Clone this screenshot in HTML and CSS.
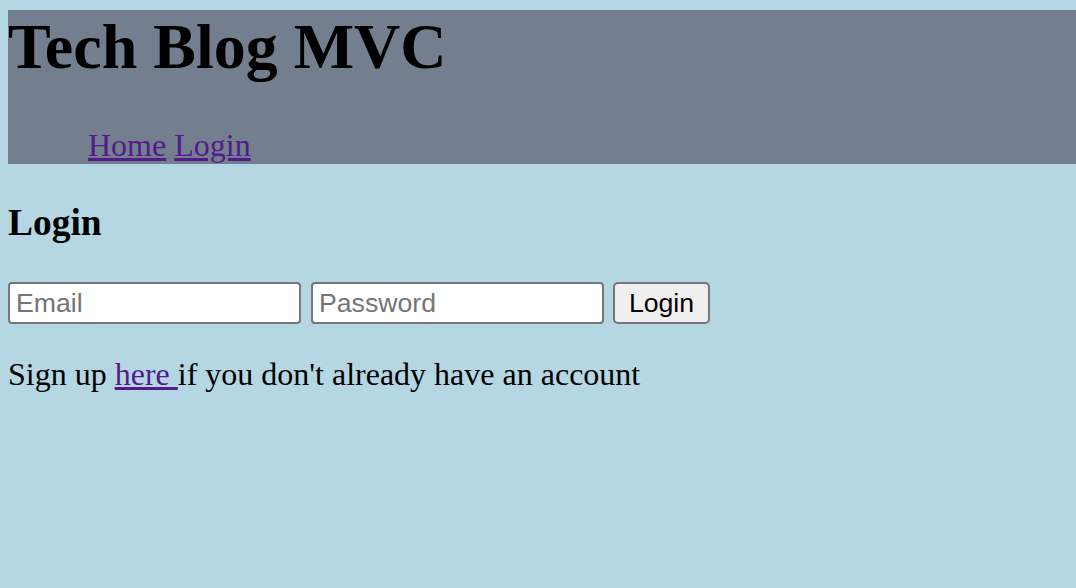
FILE: index.html
```html
<!DOCTYPE html>
<html lang="en">
<head>
<meta charset="utf-8">
<title>Tech Blog MVC</title>
<link rel="stylesheet" href="styles.css">
</head>
<body>
<header class="site-header">
  <h1 class="site-title">Tech Blog MVC</h1>
  <ul class="nav">
    <li><a class="nav-link" href="#">Home</a></li>
    <li><a class="nav-link" href="#">Login</a></li>
  </ul>
</header>
<main class="content">
  <h3 class="page-title">Login</h3>
  <form class="login-form">
    <input class="field" type="email" placeholder="Email">
    <input class="field" type="password" placeholder="Password">
    <button class="btn" type="submit">Login</button>
  </form>
  <p class="signup">Sign up <a class="signup-link" href="#">here </a>if you don't already have an account</p>
</main>
</body>
</html>
```

FILE: styles.css
```css
html {
  background: #b4d7e3;
}
body {
  margin: 10px 0 0 8px;
  font-family: "Liberation Serif", "Times New Roman", serif;
  font-size: 32px;
  color: #000;
  background: #b4d7e3;
}
a {
  color: #551a8b;
}
.site-header {
  background: #737f8e;
  display: flow-root;
}
.site-title {
  font-size: 64px;
  font-weight: bold;
  margin: 0 0 43px;
  line-height: normal;
}
.nav {
  list-style: none;
  margin: 0;
  padding: 0 0 0 80px;
  display: flex;
  gap: 8px;
}
.nav li {
  margin: 0;
}
.content {
  display: block;
}
.page-title {
  font-size: 37.44px;
  font-weight: bold;
  margin: 37px 0 38px;
}
.login-form {
  display: flex;
  gap: 10px;
  margin: 0;
}
.field {
  box-sizing: border-box;
  width: 293px;
  height: 42px;
  border: 2px solid #767676;
  border-radius: 4px;
  padding: 2px 6px;
  font-family: "Liberation Sans", Arial, sans-serif;
  font-size: 26.67px;
  background: #fff;
  color: #000;
}
.field::placeholder {
  color: #757575;
}
.btn {
  box-sizing: border-box;
  width: 97px;
  height: 42px;
  border: 2px solid #767676;
  border-radius: 5px;
  background: #efefef;
  font-family: "Liberation Sans", Arial, sans-serif;
  font-size: 26.67px;
  color: #000;
  padding: 2px 12px;
  margin-left: -1px;
}
.signup {
  margin: 32px 0 0;
}
```
